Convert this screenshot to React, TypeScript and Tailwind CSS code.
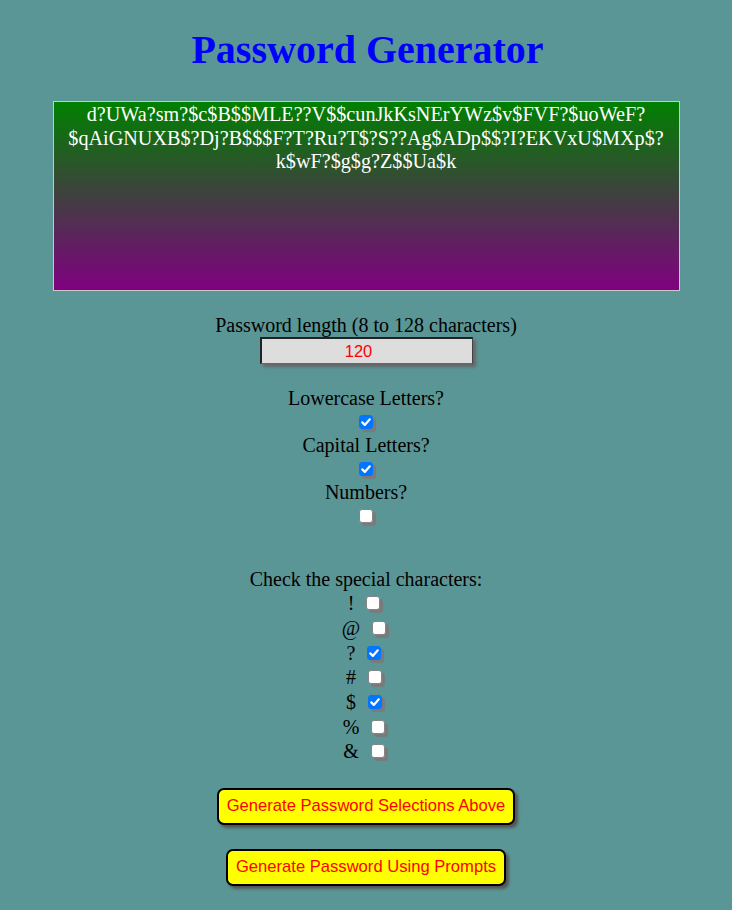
import React, { useState } from "react";

const specials = ["!", "@", "?", "#", "$", "%", "&"];

function Check({ checked, onChange }: { checked: boolean; onChange: () => void }) {
  return (
    <span className="relative inline-flex w-[14px] h-[14px] shadow-[3px_3px_1px_#7a7a7a] rounded-[3px]">
      <input
        type="checkbox"
        checked={checked}
        onChange={onChange}
        className={
          "appearance-none m-0 w-[14px] h-[14px] rounded-[3px] cursor-pointer " +
          (checked ? "bg-[#0075ff] border border-[#0075ff]" : "bg-white border border-[#858585]")
        }
      />
      {checked && (
        <svg viewBox="0 0 14 14" className="absolute inset-0 w-[14px] h-[14px] pointer-events-none">
          <path d="M3.3 7.4 L5.8 9.9 L10.8 4.3" fill="none" stroke="white" strokeWidth="2.2" strokeLinecap="round" strokeLinejoin="round" />
        </svg>
      )}
    </span>
  );
}

export default function App() {
  const [opts, setOpts] = useState({ lower: true, upper: true, num: false });
  const [sp, setSp] = useState<Record<string, boolean>>({
    "!": false,
    "@": false,
    "?": true,
    "#": false,
    $: true,
    "%": false,
    "&": false,
  });
  return (
    <div className="min-h-[910px] bg-[#5b9696] font-['Liberation_Serif',serif] text-black flex flex-col items-center pt-[27px] pb-[24px]">
      <h1 className="text-[40px] leading-[46px] font-bold text-[#0000ff] pl-[3px]">Password Generator</h1>
      <div className="mt-[28px] w-[627px] h-[190px] border border-[#c8c8c8] bg-[linear-gradient(to_bottom,#008000,#800080)] text-white text-[20.2px] leading-[23.5px] text-center pt-[1px]">
        <div>d?UWa?sm?$c$B$$MLE??V$$cunJkKsNErYWz$v$FVF?$uoWeF?</div>
        <div>$qAiGNUXB$?Dj?B$$$F?T?Ru?T$?S??Ag$ADp$$?I?EKVxU$MXp$?</div>
        <div>k$wF?$g$g?Z$$Ua$k</div>
      </div>
      <div className="mt-[23px] text-[20px] leading-[23px]">Password length (8 to 128 characters)</div>
      <input
        defaultValue="120"
        className="w-[213px] h-[27px] bg-[#dddddd] text-[#ff0000] text-center font-['Liberation_Sans',sans-serif] text-[16.5px] pr-[16px] border-t-2 border-l-2 border-r border-b border-t-[#222] border-l-[#222] border-r-[#444] border-b-[#666] shadow-[3px_3px_3px_#666] outline-none"
      />
      <div className="mt-[23px] flex flex-col items-center text-[20px] leading-[23px]">
        <div>Lowercase Letters?</div>
        <div className="h-[24px] flex items-center">
          <Check checked={opts.lower} onChange={() => setOpts({ ...opts, lower: !opts.lower })} />
        </div>
        <div>Capital Letters?</div>
        <div className="h-[24px] flex items-center">
          <Check checked={opts.upper} onChange={() => setOpts({ ...opts, upper: !opts.upper })} />
        </div>
        <div>Numbers?</div>
        <div className="h-[24px] flex items-center">
          <Check checked={opts.num} onChange={() => setOpts({ ...opts, num: !opts.num })} />
        </div>
      </div>
      <div className="mt-[40px] text-[20px] leading-[23px]">Check the special characters:</div>
      <div className="flex flex-col items-center text-[20px]">
        {specials.map((c) => (
          <div key={c} className="h-[24.67px] flex items-center gap-[12px] pr-[4px]">
            <span>{c}</span>
            <Check checked={sp[c]} onChange={() => setSp({ ...sp, [c]: !sp[c] })} />
          </div>
        ))}
      </div>
      <button className="mt-[24px] h-[37px] px-[8px] bg-[#ffff00] text-[#ff0000] font-['Liberation_Sans',sans-serif] text-[16.6px] border-2 border-black rounded-[7px] shadow-[3px_3px_3px_#555]">
        Generate Password Selections Above
      </button>
      <button className="mt-[24px] h-[37px] px-[8px] bg-[#ffff00] text-[#ff0000] font-['Liberation_Sans',sans-serif] text-[16.6px] border-2 border-black rounded-[7px] shadow-[3px_3px_3px_#555]">
        Generate Password Using Prompts
      </button>
    </div>
  );
}
